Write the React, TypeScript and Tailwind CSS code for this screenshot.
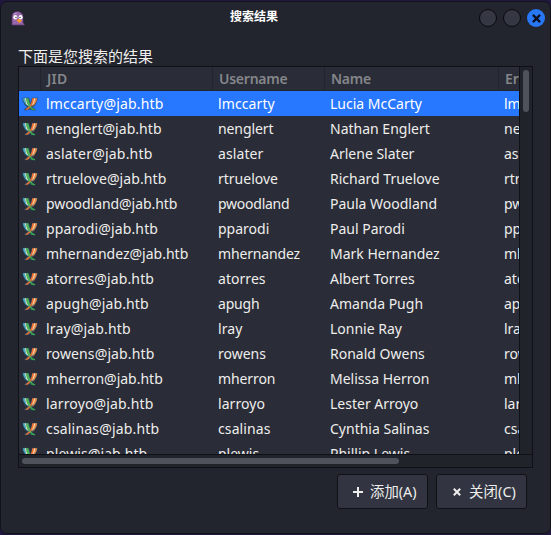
import React from 'react';

type Row = { user: string; name: string; jidTracking: number; userTracking: number };

const rows: Row[] = [
  { user: 'lmccarty', name: 'Lucia McCarty', jidTracking: 0.18, userTracking: 0.1 },
  { user: 'nenglert', name: 'Nathan Englert', jidTracking: 0.04, userTracking: -0.1 },
  { user: 'aslater', name: 'Arlene Slater', jidTracking: 0.2, userTracking: 0.1 },
  { user: 'rtruelove', name: 'Richard Truelove', jidTracking: 0.1, userTracking: 0 },
  { user: 'pwoodland', name: 'Paula Woodland', jidTracking: -0.06, userTracking: -0.25 },
  { user: 'pparodi', name: 'Paul Parodi', jidTracking: 0.14, userTracking: 0 },
  { user: 'mhernandez', name: 'Mark Hernandez', jidTracking: 0, userTracking: -0.15 },
  { user: 'atorres', name: 'Albert Torres', jidTracking: 0.14, userTracking: 0.05 },
  { user: 'apugh', name: 'Amanda Pugh', jidTracking: 0.12, userTracking: -0.2 },
  { user: 'lray', name: 'Lonnie Ray', jidTracking: 0.15, userTracking: 0.1 },
  { user: 'rowens', name: 'Ronald Owens', jidTracking: 0.12, userTracking: 0 },
  { user: 'mherron', name: 'Melissa Herron', jidTracking: 0, userTracking: -0.1 },
  { user: 'larroyo', name: 'Lester Arroyo', jidTracking: 0.14, userTracking: 0.05 },
  { user: 'csalinas', name: 'Cynthia Salinas', jidTracking: 0.18, userTracking: 0.1 },
  { user: 'plewis', name: 'Phillip Lewis', jidTracking: 0.1, userTracking: 0 },
];

const grid = 'grid w-[500px] grid-cols-[22px_172px_112px_174px_20px]';

function Jabber() {
  return (
    <svg viewBox="0 0 16 14" className="ml-[3px] h-[14px] w-4 self-center">
      <path d="M.3.8H7l1.500 5.500L10 .8h5.700l-.6 3.500-2.200 4.200-2.500 2 3 1.500v1.500l-3.800-.3-2-1-2 1.100H2.300v-1.200l3-2.200L2.700 8 .8 4Z" fill="#29475a" />
      <path d="M1 1.300h2l.7 4.200L6.300 9 3.500 7.200 1.500 4Z" fill="#46acd0" />
      <path d="M2.700 1.300h1.500L5 5.600 7.300 10 4.200 7Z" fill="#dbe7c0" />
      <path d="M4 1.200h2.300L7.600 6l2.600 5.500-2.300-.8L5 6Z" fill="#4fb457" />
      <path d="M10.200 1.200h2.200l-1 4.500L8.700 10l-.6-2 1.500-3.300Z" fill="#ee6d33" />
      <path d="M12.200 1.200h1.500l-1 4.600-3.200 3.700 1.600-4.200Z" fill="#ffdca8" />
      <path d="M13.500 1.200h1.700l-.7 3-2 3.500-2.200 2 1.800-4Z" fill="#e78645" />
      <path d="M2.800 12.800 7.200 9.300l1 1.500-2.500 2Z" fill="#df7139" />
      <path d="m8.200 10 4.800 2.200v1l-3.500-.4Z" fill="#3ba64c" />
    </svg>
  );
}

function Pidgin() {
  return (
    <svg viewBox="0 0 14 15" className="h-[15px] w-[14px]">
      <path d="M1 14V5.500C1 2.500 3 .7 6.200.7S12 2.500 12 5.500v6l1.500 2.500Z" fill="#9766ab" stroke="#5d3873" strokeWidth=".7" />
      <path d="M2.300 3.500C3 2 5 1.300 8 1.700 5.500 2 4 3 3.800 3.500Z" fill="#c39ad0" />
      <ellipse cx="4.300" cy="6.300" rx="2" ry="2.300" fill="#fff" />
      <ellipse cx="9.600" cy="6.300" rx="2" ry="2.300" fill="#fff" />
      <circle cx="5" cy="6.500" r=".65" fill="#30203b" />
      <circle cx="9" cy="6.500" r=".65" fill="#30203b" />
      <path d="m5.500 9.500 2-1.700 3.500 1.700L8.500 12Z" fill="#f59a22" />
    </svg>
  );
}

export default function App() {
  return (
    <div className="h-[535px] w-[551px] overflow-hidden bg-[#21183f] pt-px font-['Noto_Sans','Noto_Sans_CJK_SC',sans-serif] text-[14px] text-[#eeeeec]">
      <div className="flex h-[533px] w-[551px] flex-col rounded-[7px] border border-[#121318] bg-[#23252e]">
        <header className="flex h-8 items-center">
          <div className="w-[229px] pl-[10px]"><Pidgin /></div>
          <h1 className="pb-[2px] text-[12px] font-bold leading-4 text-white">搜索结果</h1>
          <div className="ml-auto flex gap-[6px] pr-[5px]">
            <span className="size-[18px] rounded-full border border-[#08090c] bg-[#353842]" />
            <span className="size-[18px] rounded-full border border-[#08090c] bg-[#353842]" />
            <span className="grid size-[18px] place-items-center rounded-full bg-[#2777f7]">
              <svg viewBox="0 0 8 8" className="size-[9px]"><path d="m.8.8 6.400 6.400m0-6.400L.8 7.200" stroke="#0b1020" strokeWidth="2" /></svg>
            </span>
          </div>
        </header>
        <p className="ml-[17px] mt-[12px] h-5 text-[15px] leading-5">下面是您搜索的结果</p>
        <section className="ml-[17px] h-[402px] w-[515px] border border-[#0f1116]">
          <div className="flex h-[387px]">
            <div className="w-[500px] overflow-hidden bg-[#2a2c37]">
              <div className={`${grid} h-6 border-b border-[#23252e] font-semibold leading-[23px] text-[#84868a]`}>
                <span className="border-r border-[#23252e]" />
                <span className="border-r border-[#23252e] pl-[6px] tracking-[0.2px]">JID</span>
                <span className="border-r border-[#23252e] pl-[6px] tracking-[-0.25px]">Username</span>
                <span className="border-r border-[#23252e] pl-[6px] tracking-[-0.25px]">Name</span>
                <span className="overflow-hidden pl-[6px]">Er</span>
              </div>
              {rows.map(({ user, name, jidTracking, userTracking }, i) => (
                <div key={user} className={`${grid} h-[25px] whitespace-nowrap leading-[25px] ${i === 0 ? 'bg-[#2777ff] text-white' : ''}`}>
                  <Jabber />
                  <span className="pl-[5px]" style={{ letterSpacing: jidTracking }}>{user}@jab.htb</span>
                  <span className="pl-[5px]" style={{ letterSpacing: userTracking }}>{user}</span>
                  <span className="pl-[5px]">{name}</span>
                  <span className="overflow-hidden pl-[5px]">{user.slice(0, 3)}</span>
                </div>
              ))}
            </div>
            <div className="flex w-[13px] border-l border-[#0f1116] bg-[#20232a] pl-[3px] pt-[3px]">
              <span className="h-[42px] w-[6px] rounded-full bg-[#50525b]" />
            </div>
          </div>
          <div className="h-[13px] border-t border-[#0f1116] bg-[#20232a] pl-[3px] pt-[3px]">
            <div className="h-[6px] w-[377px] rounded-full bg-[#50525b]" />
          </div>
        </section>
        <footer className="mt-[6px] flex justify-end gap-[8px] pr-[23px]">
          <button className="flex h-[35px] w-[91px] items-center rounded-[3px] border border-[#101116] bg-[#323541] pl-[15px]">
            <svg viewBox="0 0 10 10" className="mr-[7px] size-[10px]"><path d="M5 0v10M0 5h10" stroke="#eeeeec" strokeWidth="2" /></svg>
            <span className="text-[14.4px]">添加(A)</span>
          </button>
          <button className="flex h-[35px] w-[91px] items-center rounded-[3px] border border-[#101116] bg-[#323541] pl-[16px]">
            <svg viewBox="0 0 8 8" className="mr-[8px] size-2"><path d="m.8.8 6.400 6.400m0-6.400L.8 7.200" stroke="#eeeeec" strokeWidth="2" /></svg>
            <span className="text-[14.4px] tracking-[0.1px]">关闭(C)</span>
          </button>
        </footer>
      </div>
    </div>
  );
}
